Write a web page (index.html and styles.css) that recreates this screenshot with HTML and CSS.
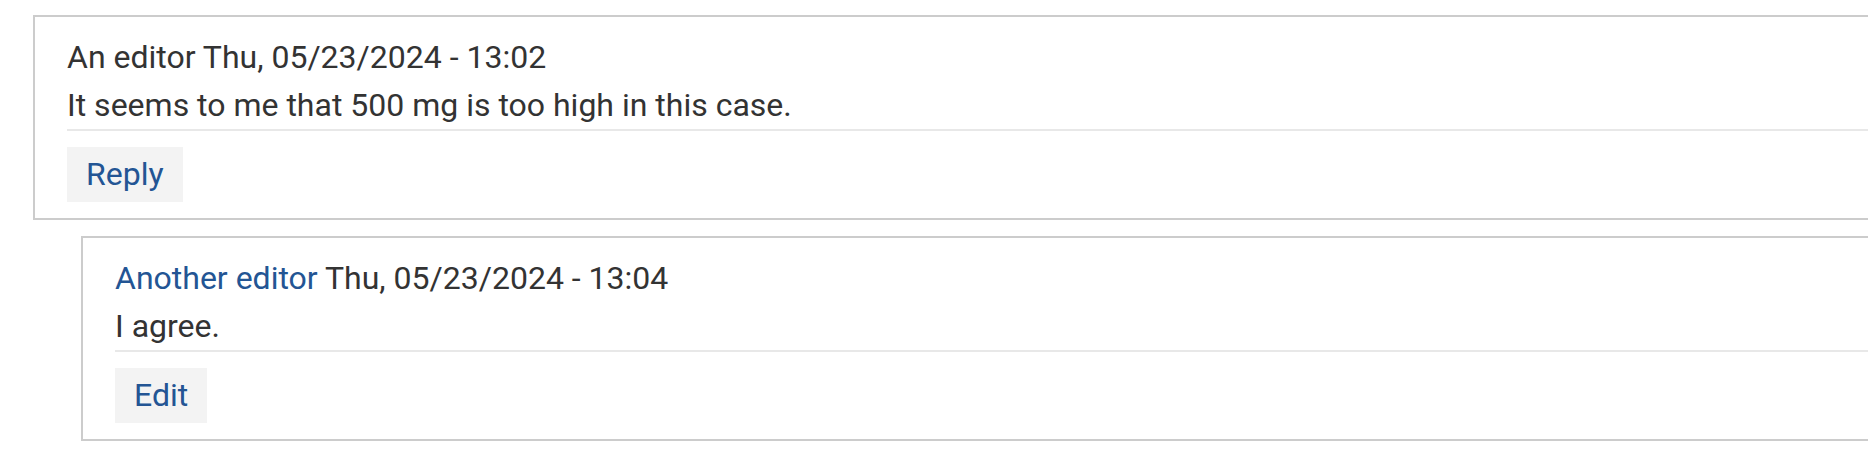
FILE: index.html
```html
<!DOCTYPE html>
<html lang="en">

<head>
    <meta charset="UTF-8">
    <title>Comments</title>
    <link rel="stylesheet" href="styles.css">
</head>

<body>
    <div class="comments">
        <!-- Top level comment -->
        <article class="comment">
            <div class="comment-body">
                <div class="meta">An editor <span class="date">Thu, 05/23/2024 - 13:02</span></div>
                <p class="text">It seems to me that 500 mg is too high in this case.</p>
            </div>
            <a href="#" class="button">Reply</a>
        </article>

        <!-- Reply -->
        <article class="comment indented">
            <div class="comment-body">
                <div class="meta"><a href="#" class="author">Another editor</a> <span class="date">Thu, 05/23/2024 - 13:04</span></div>
                <p class="text">I agree.</p>
            </div>
            <a href="#" class="button">Edit</a>
        </article>
    </div>
</body>

</html>
```

FILE: styles.css
```css
body {
    font-family: Roboto, "Liberation Sans", Arial, sans-serif;
    font-size: 32px;
    line-height: 48px;
    color: #333;
    background-color: #fff;
    margin: 0;
    padding: 15px 0 0 33px;
    overflow: hidden;
}

a {
    color: #235594;
    text-decoration: none;
}

.comment {
    border: 2px solid #ccc;
    padding: 16px 32px;
    margin-right: -40px;
}

.indented {
    margin-left: 48px;
    margin-top: 16px;
}

.comment-body {
    border-bottom: 2px solid #e8e8e8;
    margin-bottom: 16px;
}

.meta,
.text {
    margin: 0;
}

.button {
    display: inline-block;
    background-color: #f3f3f3;
    padding: 3px 19px 4px;
    vertical-align: top;
}
```
